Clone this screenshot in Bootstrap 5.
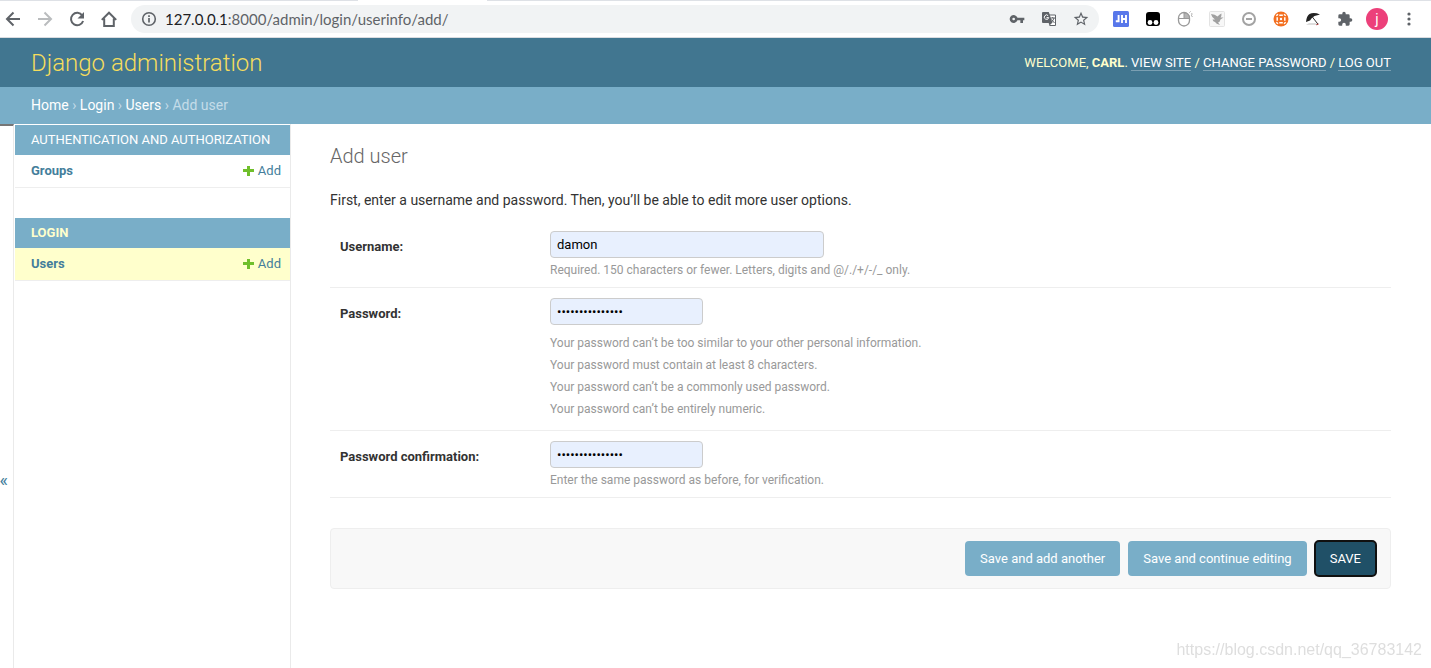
<!DOCTYPE html>
<html lang="en">
<head>
<meta charset="utf-8">
<meta name="viewport" content="width=device-width, initial-scale=1">
<title>Add user | Django site admin</title>
<link href="https://cdn.jsdelivr.net/npm/bootstrap@5.3.0/dist/css/bootstrap.min.css" rel="stylesheet">
<style>
  body { font-family: Roboto, "Liberation Sans", sans-serif; font-size: 14px; line-height: 20px; color: #333; background: #fff; }
  a { color: #447e9b; text-decoration: none; }
  svg { display: block; flex: none; }

  /* browser chrome */
  .tab-edge { height: 1px; background: #dee1e6; }
  .tab-edge-before { flex: 0 0 25%; }
  .tab-edge-active { flex: 0 0 9%; background: #fff; }
  .toolbar { height: 37px; padding: 0 14px 0 5px; gap: 14px; border-bottom: 1px solid #dadce0; color: #5f6368; }
  .tool-group { gap: 16px; }
  .tool { padding: 0; border: 0; background: none; color: inherit; }
  .tool:disabled { color: #babcbe; }
  .omnibox { height: 28px; padding: 0 10px; gap: 8px; border-radius: 14px; background: #f1f3f4; }
  .address { font-family: Lato, "Open Sans", sans-serif; font-size: 15px; outline: 0; white-space: nowrap; overflow: hidden; }
  .address-host { color: #202124; }
  .avatar { width: 22px; height: 22px; margin: 0 -3px; background: #ec407a; color: #fff; font-size: 14px; line-height: 20px; }

  /* admin header */
  .admin-header { min-height: 49px; padding: 0 40px 0 31px; background: #417690; color: #ffc; }
  .site-name { font-size: 24px; line-height: 28px; font-weight: 300; }
  .site-name a { color: #f5dd5d; }
  .user-tools { font-size: 13px; line-height: 16px; }
  .user-tools a { color: #fff; border-bottom: 1px solid #7a9fb2; }
  .crumbs { padding: 8px 40px 9px 31px; background: #79aec8; color: #c4dce8; }
  .crumbs a { color: #fff; }

  /* sidebar */
  .nav-toggle { width: 14px; padding: 166px 5px 0 0; border: 0; border-top: 2px solid #767676; border-right: 1px solid #eaeaea; background: #fff; color: #447e9b; font-size: 18px; }
  .side-nav { width: 277px; padding: 1px 0 0 1px; border-right: 1px solid #eaeaea; }
  .app-table { width: 100%; margin-bottom: 30px; font-size: 13px; line-height: 16px; }
  .app-table caption { padding: 7px 16px; background: #79aec8; }
  .app-table caption a { color: #fff; }
  .app-table th { padding: 8px 16px; border-bottom: 1px solid #eee; font-weight: 700; }
  .app-table td { padding: 8px 9px; border-bottom: 1px solid #eee; }
  .app-current caption a { color: #ffc; font-weight: 700; }
  .model-current { background: #ffc; }

  /* form */
  .page-body { padding: 20px 40px 40px 39px; min-width: 0; }
  .page-body h1 { margin: 0 0 22px; font-size: 20px; line-height: 24px; font-weight: 300; color: #666; }
  .page-body .intro { margin: 0 0 11px; }
  .form-line { padding: 10px; border-bottom: 1px solid #eee; font-size: 13px; }
  .form-line label { flex: 0 0 210px; padding-top: 6px; font-weight: 700; }
  .admin-input { width: 153px; height: 27px; padding: 4px 6px; border: 1px solid #ccc; border-radius: 4px; background: #e8f0fe; color: #000; font-size: 13px; line-height: 17px; }
  .admin-input-wide { width: 274px; max-width: 100%; }
  .help-line { padding-top: 5px; font-size: 12px; line-height: 14px; color: #999; }
  .help-list { margin: 7px 0 0; font-size: 12px; line-height: 22px; color: #999; }
  .submit-line { margin-top: 30px; padding: 12px 14px; gap: 8px; border: 1px solid #eee; border-radius: 4px; background: #f8f8f8; }
  .btn-admin { height: 35px; padding: 0 15px; border: 0; border-radius: 4px; background: #79aec8; color: #fff; font-size: 13px; line-height: 35px; }
  .btn-admin-default { background: #205067; outline: 2px solid #101010; outline-offset: -1px; }
  .watermark { position: fixed; right: 9px; bottom: 8px; font-family: "Liberation Sans", sans-serif; font-size: 16px; color: #dedede; }
</style>
</head>
<body class="d-flex flex-column min-vh-100">

<div class="d-flex" aria-hidden="true">
  <div class="tab-edge tab-edge-before"></div>
  <div class="tab-edge tab-edge-active"></div>
  <div class="tab-edge flex-fill"></div>
</div>
<div class="toolbar d-flex align-items-center">
  <div class="tool-group d-flex">
    <button class="tool" type="button" aria-label="Back"><svg width="16" height="16" viewBox="0 0 16 16" fill="none" stroke="currentColor" stroke-width="2"><path d="M15 8H2.500M8.500 1.500L2 8l6.500 6.500"/></svg></button>
    <button class="tool" type="button" aria-label="Forward" disabled><svg width="16" height="16" viewBox="0 0 16 16" fill="none" stroke="currentColor" stroke-width="2"><path d="M1 8h12.500M7.500 1.500L14 8l-6.500 6.500"/></svg></button>
    <button class="tool" type="button" aria-label="Reload"><svg width="16" height="16" viewBox="0 0 16 16"><path d="M13.300 4.500A6.200 6.200 0 1 0 14.100 10" fill="none" stroke="currentColor" stroke-width="2"/><path d="M15 1v6.500H8.500z" fill="currentColor"/></svg></button>
    <button class="tool" type="button" aria-label="Home"><svg width="16" height="16" viewBox="0 0 16 16" fill="none" stroke="currentColor" stroke-width="2"><path d="M.8 8.900L8 1.700l7.200 7.200M3.200 7.500V15h9.600V7.500"/></svg></button>
  </div>
  <div class="omnibox d-flex align-items-center flex-fill">
    <button class="tool" type="button" aria-label="Site information"><svg width="16" height="16" viewBox="0 0 16 16" fill="none" stroke="currentColor"><circle cx="8" cy="8" r="6.300" stroke-width="1.600"/><path d="M8 7v4.500M8 4.300v1.700" stroke-width="1.700"/></svg></button>
    <div class="address flex-fill" role="textbox" aria-label="Address" contenteditable="true" spellcheck="false"><span class="address-host">127.0.0.1</span>:8000/admin/login/userinfo/add/</div>
    <div class="tool-group d-flex">
      <button class="tool" type="button" aria-label="Saved passwords"><svg width="16" height="16" viewBox="0 0 24 24" fill="currentColor"><path d="M12.650 10A6 6 0 1 0 12.650 14H17v4h4v-4h2v-4H12.650zM7 14a2 2 0 1 1 0-4 2 2 0 0 1 0 4z"/></svg></button>
      <button class="tool" type="button" aria-label="Translate"><svg width="16" height="16" viewBox="0 0 16 16"><path d="M6.500 4H14.500v10.500H8.500" fill="#fff" stroke="currentColor"/><path d="M2 1h5.800l3.700 11H2a1 1 0 0 1-1-1V2a1 1 0 0 1 1-1z" fill="currentColor"/><path d="M7.200 4.700A2.200 2.200 0 1 0 7.700 6.600H5.500" fill="none" stroke="#fff"/><path d="M9.500 7h4.500M11.700 6v1M13 7q-.6 2.300-2.500 4M10.500 8.500L13.500 12" fill="none" stroke="currentColor"/><path d="M8.500 14.500L11 12H7.700z" fill="currentColor"/></svg></button>
      <button class="tool" type="button" aria-label="Bookmark this tab"><svg width="16" height="16" viewBox="1 1 22 22" fill="currentColor"><path d="M22 9.240l-7.190-.62L12 2 9.190 8.630 2 9.240l5.460 4.730L5.820 21 12 17.270 18.180 21l-1.630-7.030L22 9.240zM12 15.400l-3.760 2.270 1-4.280-3.320-2.880 4.380-.38L12 6.100l1.710 4.040 4.380.38-3.320 2.880 1 4.280L12 15.400z"/></svg></button>
    </div>
  </div>
  <div class="tool-group d-flex align-items-center">
    <button class="tool" type="button" aria-label="JSON Handle"><svg width="16" height="16" viewBox="0 0 16 16"><rect width="16" height="16" rx="1.500" fill="#5877ea"/><path d="M2.800 10.200H5.600V4M9 4v8M13 4v8M9 8h4" fill="none" stroke="#fff" stroke-width="1.900"/></svg></button>
    <button class="tool" type="button" aria-label="Tampermonkey"><svg width="16" height="16" viewBox="0 0 16 16"><rect x="1" y="1" width="14" height="14" rx="3" fill="#000"/><circle cx="5" cy="11.500" r="2.400" fill="#fff"/><circle cx="11" cy="11.500" r="2.400" fill="#fff"/></svg></button>
    <button class="tool" type="button" aria-label="Mouse gestures"><svg width="16" height="16" viewBox="0 0 16 16" fill="none" stroke="#999"><rect x="1.500" y="1.500" width="11" height="13.500" rx="5.500" stroke-width="1.300"/><path d="M7 2v5.500h5.500Q12.500 2 7 2z" fill="#b5b5b5"/><path d="M1.500 7.500h11M12.500 1.500l1-1M14 3h1.500M14 4.500l1.500 1"/></svg></button>
    <button class="tool" type="button" aria-label="Bird"><svg width="16" height="16" viewBox="0 0 16 16"><rect x=".5" y=".5" width="15" height="15" rx="1" fill="#f7f7f7" stroke="#e3e3e3"/><path d="M2 3q4 .2 6.500 2.500Q11 3 12.500 2.500q.2 2.500-1 4L14.500 6.500 11.500 8.500q-.5 2.500-2.500 3l2 2.500Q7 13 6 11 4 10.500 3.500 8.500L6 8.500Q2.800 6.500 2 3z" fill="#a0a0a0"/></svg></button>
    <button class="tool" type="button" aria-label="Blocker"><svg width="16" height="16" viewBox="0 0 16 16" fill="none" stroke="#a3a3a3" stroke-width="2"><circle cx="8" cy="8" r="6"/><path d="M5 8h6"/></svg></button>
    <button class="tool" type="button" aria-label="Switch"><svg width="16" height="16" viewBox="0 0 16 16"><circle cx="8" cy="8" r="7.500" fill="#f37021"/><g fill="none" stroke="#fff" stroke-width="1.500"><path d="M6.300 4.200L9.800 4.200M11.800 6.300L11.800 9.800M9.800 11.800L6.300 11.800M4.200 9.800L4.200 6.300M3.300 4.800L5 3.300M11 3.300L12.700 4.800M12.700 11.200L11 12.700M5 12.700L3.300 11.200"/></g><circle cx="8" cy="8" r="1.200" fill="#fff"/></svg></button>
    <button class="tool" type="button" aria-label="Umbrella"><svg width="16" height="16" viewBox="0 0 16 16"><path d="M1 14l3-2h6l4 2z" fill="#ddd"/><path d="M1 11Q1.500 5 4.500 3 9 1 15 3.500L9.500 5Q6.500 6.500 5 9.500z" fill="#222"/><path d="M7 5.500L12.800 13" stroke="#333"/><path d="M11.300 13.800l2.300-.8" stroke="#a33"/></svg></button>
    <button class="tool" type="button" aria-label="Extensions"><svg width="16" height="16" viewBox="0 0 24 24" fill="currentColor"><path d="M20.500 11H19V7a2 2 0 0 0-2-2h-4V3.500a2.500 2.500 0 0 0-5 0V5H4a2 2 0 0 0-2 2v3.800h1.500a2.700 2.700 0 0 1 0 5.400H2V20a2 2 0 0 0 2 2h3.800v-1.500a2.700 2.700 0 0 1 5.400 0V22H17a2 2 0 0 0 2-2v-4h1.500a2.500 2.500 0 0 0 0-5z"/></svg></button>
    <button class="tool avatar rounded-circle" type="button">j</button>
    <button class="tool" type="button" aria-label="Menu"><svg width="16" height="16" viewBox="0 0 16 16" fill="currentColor"><circle cx="8" cy="3" r="1.600"/><circle cx="8" cy="8" r="1.600"/><circle cx="8" cy="13" r="1.600"/></svg></button>
  </div>
</div>

<header class="admin-header d-flex align-items-center justify-content-between">
  <div class="site-name"><a href="#">Django administration</a></div>
  <div class="user-tools text-uppercase">Welcome, <strong>Carl</strong>. <a href="#">View site</a> / <a href="#">Change password</a> / <a href="#">Log out</a></div>
</header>
<nav class="crumbs" aria-label="Breadcrumbs"><a href="#">Home</a> › <a href="#">Login</a> › <a href="#">Users</a> › Add user</nav>

<div class="d-flex flex-fill">
  <button class="nav-toggle d-flex align-items-center justify-content-end flex-shrink-0" type="button" aria-label="Toggle navigation"><span>«</span></button>
  <nav class="side-nav flex-shrink-0" aria-label="Applications">
    <table class="app-table caption-top">
      <caption><a href="#" class="text-uppercase">Authentication and Authorization</a></caption>
      <tbody><tr>
        <th scope="row"><a href="#">Groups</a></th>
        <td><a href="#" class="d-flex align-items-center justify-content-end gap-1"><svg width="11" height="11" viewBox="0 0 11 11"><path d="M4 0h3v3h4v3H7v4H4V6H0V3h4z" fill="#70bf2b"/></svg>Add</a></td>
      </tr></tbody>
    </table>
    <table class="app-table app-current caption-top">
      <caption><a href="#" class="text-uppercase">Login</a></caption>
      <tbody><tr class="model-current">
        <th scope="row"><a href="#">Users</a></th>
        <td><a href="#" class="d-flex align-items-center justify-content-end gap-1"><svg width="11" height="11" viewBox="0 0 11 11"><path d="M4 0h3v3h4v3H7v4H4V6H0V3h4z" fill="#70bf2b"/></svg>Add</a></td>
      </tr></tbody>
    </table>
  </nav>

  <main class="page-body flex-fill">
    <h1>Add user</h1>
    <form>
      <p class="intro">First, enter a username and password. Then, you’ll be able to edit more user options.</p>
      <div class="form-line d-flex">
        <label for="username">Username:</label>
        <div>
          <input class="admin-input admin-input-wide d-block" type="text" id="username" value="damon">
          <div class="help-line">Required. 150 characters or fewer. Letters, digits and @/./+/-/_ only.</div>
        </div>
      </div>
      <div class="form-line d-flex">
        <label for="password1">Password:</label>
        <div>
          <input class="admin-input d-block" type="password" id="password1" value="damon1234567890">
          <ul class="help-list list-unstyled">
            <li>Your password can’t be too similar to your other personal information.</li>
            <li>Your password must contain at least 8 characters.</li>
            <li>Your password can’t be a commonly used password.</li>
            <li>Your password can’t be entirely numeric.</li>
          </ul>
        </div>
      </div>
      <div class="form-line d-flex">
        <label for="password2">Password confirmation:</label>
        <div>
          <input class="admin-input d-block" type="password" id="password2" value="damon1234567890">
          <div class="help-line">Enter the same password as before, for verification.</div>
        </div>
      </div>
      <div class="submit-line d-flex flex-wrap justify-content-end">
        <button class="btn btn-admin" type="button">Save and add another</button>
        <button class="btn btn-admin" type="button">Save and continue editing</button>
        <button class="btn btn-admin btn-admin-default" type="submit">SAVE</button>
      </div>
    </form>
  </main>
</div>
<div class="watermark">https://blog.csdn.net/qq_36783142</div>

<script src="https://cdn.jsdelivr.net/npm/bootstrap@5.3.0/dist/js/bootstrap.bundle.min.js"></script>
</body>
</html>
